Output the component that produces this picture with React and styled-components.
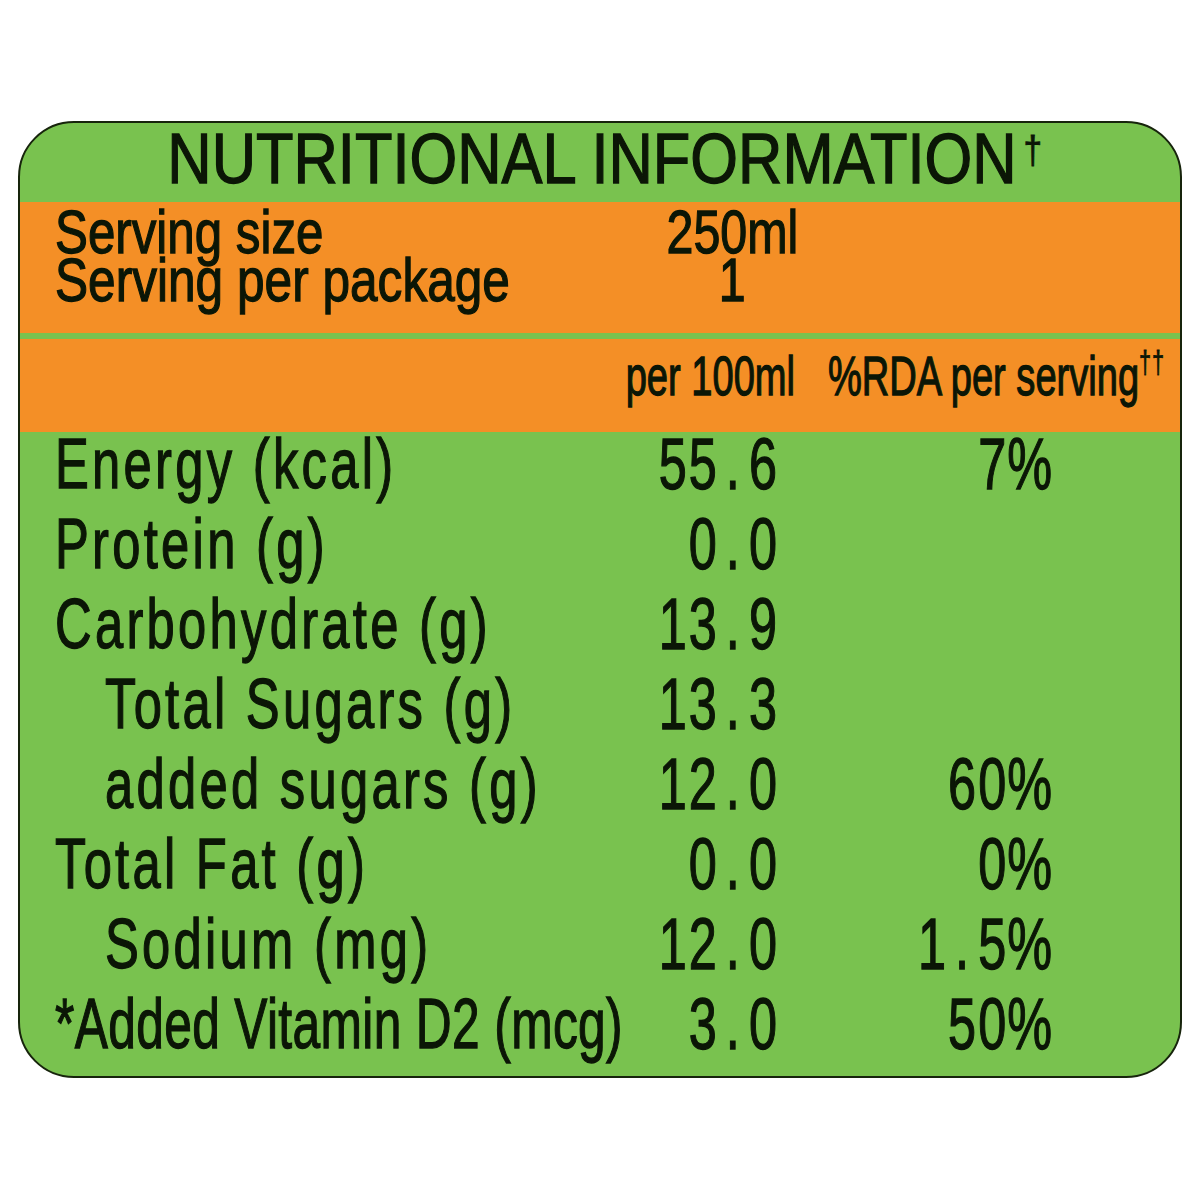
import styled, { createGlobalStyle } from 'styled-components';

const GlobalStyle = createGlobalStyle`
  body {
    margin: 0;
    background: #ffffff;
  }
`;

const INK = '#0b1606';
const GREEN = '#79c24f';
const ORANGE = '#f48f26';

const Page = styled.div`
  width: 1200px;
  height: 1200px;
  padding-top: 121px;
  padding-left: 18px;
  box-sizing: border-box;
`;

const Panel = styled.div`
  width: 1164px;
  height: 957px;
  box-sizing: border-box;
  border: 2px solid #17240c;
  border-radius: 56px;
  background: ${GREEN};
  overflow: hidden;
  display: flex;
  flex-direction: column;
  font-family: "Liberation Sans", Arial, sans-serif;
  color: ${INK};
  -webkit-text-stroke: 1.3px ${INK};
`;

// condensed type: Liberation Sans squeezed horizontally
const Sq = styled.span`
  display: inline-block;
  white-space: nowrap;
  transform: scaleX(${(p) => p.$s || 0.77});
  transform-origin: ${(p) => p.$o || 'left'} center;
  letter-spacing: ${(p) => p.$ls || 0}px;
`;

// tabular figures: every digit and the point sit in an equal cell
const Fig = styled.span`
  display: inline-block;
  width: ${(p) => p.$w}px;
  text-align: center;
`;

const Title = styled.h1`
  margin: 0;
  height: 79px;
  display: flex;
  align-items: flex-end;
  justify-content: center;
  font-size: 70px;
  font-weight: 400;
  line-height: 1;
  padding: 0 0 8px 10px;
  box-sizing: border-box;

  sup {
    font-size: 38px;
    vertical-align: 20px;
    margin-left: 8px;
    -webkit-text-stroke: 0.8px ${INK};
  }
`;

const Band = styled.div`
  background: ${ORANGE};
  height: ${(p) => p.$h}px;
  margin-top: ${(p) => p.$gap || 0}px;
  box-sizing: border-box;
  padding: ${(p) => p.$pad || '0 0 0 35px'};
`;

const ServingGrid = styled.div`
  display: grid;
  grid-template-columns: 580px 194px;
  grid-auto-rows: 48px;
  font-size: 62px;
  line-height: 48px;
`;

const Cell = styled.div`
  display: flex;
  min-width: 0;
  justify-content: ${(p) => p.$j || 'flex-start'};
  padding-left: ${(p) => p.$pl || 0}px;
`;

const HeadGrid = styled.div`
  display: grid;
  grid-template-columns: 580px 160px 380px;
  align-items: end;
  height: 100%;
  padding-bottom: 28px;
  box-sizing: border-box;
  font-size: 56px;
  line-height: 1;

  sup {
    font-size: 32px;
    vertical-align: 22px;
    letter-spacing: 1px;
    -webkit-text-stroke: 0.8px ${INK};
  }
`;

const Rows = styled.div`
  padding: 0 0 0 35px;
  margin-top: -8px;
`;

const Row = styled.div`
  display: grid;
  grid-template-columns: 580px 143px 274px;
  height: 80px;
  align-items: center;
  font-size: 72px;
  line-height: 1;
`;

const Label = styled(Sq)`
  font-size: 70px;
`;

const FIG_W = 43;

const Figures = ({ text }) => (
  <Sq $s={0.7} $o="right">
    {text.split('').map((c, i) =>
      c === '%' ? (
        <span key={i}>%</span>
      ) : (
        <Fig key={i} $w={FIG_W}>
          {c}
        </Fig>
      )
    )}
  </Sq>
);

const rows = [
  { label: 'Energy (kcal)', value: '55.6', pct: '7%' },
  { label: 'Protein (g)', value: '0.0' },
  { label: 'Carbohydrate (g)', value: '13.9' },
  { label: 'Total Sugars (g)', value: '13.3', indent: true },
  { label: 'added sugars (g)', value: '12.0', pct: '60%', indent: true },
  { label: 'Total Fat (g)', value: '0.0', pct: '0%' },
  { label: 'Sodium (mg)', value: '12.0', pct: '1.5%', indent: true },
  { label: '*Added Vitamin D2 (mcg)', value: '3.0', pct: '50%', tight: true },
];

export default function App() {
  return (
    <Page>
      <GlobalStyle />
      <Panel>
        <Title>
          <Sq $s={0.877} $o="center">
            NUTRITIONAL INFORMATION<sup>†</sup>
          </Sq>
        </Title>
        <Band $h={131} $pad="6px 0 0 35px">
          <ServingGrid>
            <Cell>
              <Sq $s={0.795}>Serving size</Sq>
            </Cell>
            <Cell $j="center">
              <Sq $s={0.78} $o="center">250ml</Sq>
            </Cell>
            <Cell>
              <Sq $s={0.8}>Serving per package</Sq>
            </Cell>
            <Cell $j="center">
              <Sq $s={0.78} $o="center">1</Sq>
            </Cell>
          </ServingGrid>
        </Band>
        <Band $h={93} $gap={6}>
          <HeadGrid>
            <Cell />
            <Cell $j="flex-end">
              <Sq $s={0.68} $o="right">per 100ml</Sq>
            </Cell>
            <Cell $pl={33}>
              <Sq $s={0.68}>
                %RDA per serving<sup>††</sup>
              </Sq>
            </Cell>
          </HeadGrid>
        </Band>
        <Rows>
          {rows.map((r) => (
            <Row key={r.label}>
              <Cell $pl={r.indent ? 50 : 0}>
                <Label $s={r.tight ? 0.71 : 0.725} $ls={r.tight ? 0.5 : 4.5}>
                  {r.label}
                </Label>
              </Cell>
              <Cell $j="flex-end">
                <Figures text={r.value} />
              </Cell>
              <Cell $j="flex-end">{r.pct && <Figures text={r.pct} />}</Cell>
            </Row>
          ))}
        </Rows>
      </Panel>
    </Page>
  );
}
